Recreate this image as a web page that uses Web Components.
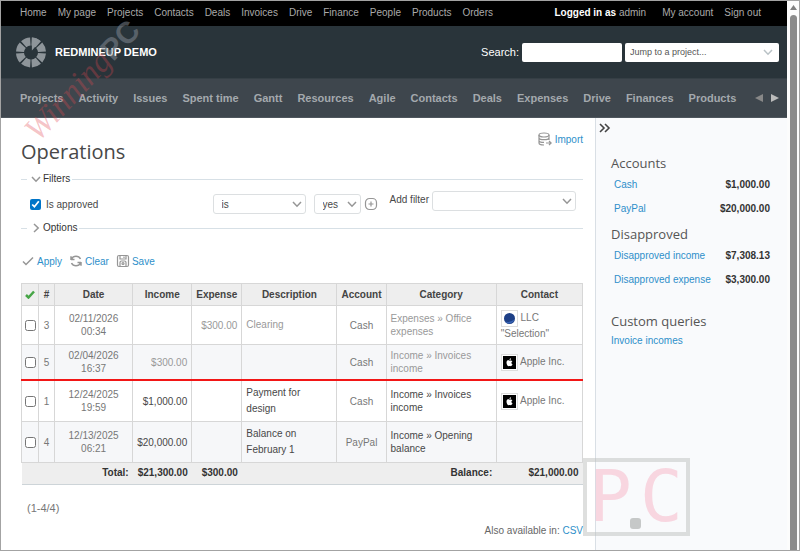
<!DOCTYPE html>
<html lang="en">
<head>
<meta charset="utf-8">
<title>Operations - RedmineUP Demo</title>
<style>
  :root {
    --link: #2e8fca;
    --text: #484848;
    --muted: #999;
    --line: #d7d7d7;
    --heading-font: "Open Sans", "Noto Sans", sans-serif;
  }

  body {
    margin: 0;
    font: 10px/13px "Liberation Sans", Arial, sans-serif;
    color: var(--text);
    background: #fff;
  }
</style>
</head>
<body>
<rm-window>
  <rm-top-menu></rm-top-menu>
  <rm-header>REDMINEUP DEMO</rm-header>
  <rm-main-menu></rm-main-menu>
  <rm-columns>
    <rm-content>
      <rm-title-bar>Operations</rm-title-bar>
      <rm-query-form></rm-query-form>
      <rm-operations></rm-operations>
      <rm-list-footer></rm-list-footer>
    </rm-content>
    <rm-sidebar slot="sidebar"></rm-sidebar>
  </rm-columns>
</rm-window>
<rm-watermark></rm-watermark>
<rm-stamp></rm-stamp>

<script>
class Component extends HTMLElement {
  constructor() {
    super()
    this.attachShadow({ mode: 'open' })
  }

  connectedCallback() {
    this.shadowRoot.innerHTML = this.render()
  }
}

const linkList = (items) => items.map((item) => `<a href="#">${item}</a>`).join('')

const icons = {
  check: '<path d="M2 7.5 5 10.500 12 3.500" stroke-width="1.5"/>',
  reload: '<path d="M2 6V2.2M2 5.5h3.5M2.5 5A5 5 0 0 1 11.5 5M12 8v3.8M12 8.5H8.5M11.5 9A5 5 0 0 1 2.5 9" stroke-width="1.5"/>',
  save: '<rect x="1.5" y="1.5" width="11" height="11" rx="1.5"/><path d="M4 1.5V5h6V1.5M8 2.5v1.5M4 12.5V8.5Q4 7 5.500 7h3Q10 7 10 8.500v4"/><circle cx="7" cy="9.500" r="1"/>',
  database: '<ellipse cx="6" cy="3" rx="5" ry="2"/><path d="M1 3v8c0 1.200 2 2 5 2M1 5.700c0 1.200 2 2 5 2s5-.8 5-2M1 8.400c0 1.200 2 2 5 2M11 3v5M8 11h5M11 9l2.200 2L11 13"/>',
  plus: '<rect x="1.500" y="1.500" width="11" height="11" rx="4"/><path d="M7 4.500v5M4.500 7h5"/>',
  down: '<path d="M3 5l4 4.200L11 5" stroke-width="1.500"/>',
  right: '<path d="M5 3l4.200 4L5 11" stroke-width="1.500"/>',
  double: '<path d="M2 3l4 4-4 4M7 3l4 4-4 4" stroke-width="1.600"/>'
}

class Icon extends Component {
  render() {
    return `
      <style>
        :host { display: inline-block; width: 14px; height: 14px; flex: none; color: #969696; }
        svg { display: block; width: 100%; height: 100%; }
      </style>
      <svg viewBox="0 0 14 14" fill="none" stroke="currentColor" stroke-width="1.2" aria-hidden="true">
        ${icons[this.getAttribute('name')]}
      </svg>
    `
  }
}

// Page frame with the vertical scrollbar at its right
class Window extends Component {
  render() {
    return `
      <style>
        :host { display: flex; box-sizing: border-box; min-height: 100vh; border: 1px solid #a3a3a3; }
        main { flex: 1; min-width: 0; display: flex; flex-direction: column; }
        .scroll { flex: 0 0 12px; display: flex; flex-direction: column; align-items: center; background: #fcfcfc; }
        svg { width: 7px; height: 5px; margin: 4px 0 5px; }
        .thumb { flex: 1; width: 7px; border-radius: 4px 4px 0 0; background: #8b8b8b; }
      </style>
      <main><slot></slot></main>
      <div class="scroll">
        <svg viewBox="0 0 7 5"><path d="M3.5 0 7 5H0z" fill="#808080"/></svg>
        <div class="thumb"></div>
      </div>
    `
  }
}

class TopMenu extends Component {
  render() {
    const items = ['Home', 'My page', 'Projects', 'Contacts', 'Deals', 'Invoices', 'Drive', 'Finance', 'People', 'Products', 'Orders']

    return `
      <style>
        :host { display: flex; justify-content: space-between; height: 25px; line-height: 23px; padding: 0 26px 0 19px; background: #000; color: #fff; }
        nav { display: flex; gap: 11px; white-space: nowrap; }
        a { color: #aaa; text-decoration: none; }
        .user { margin-right: 5px; }
      </style>
      <nav>${linkList(items)}</nav>
      <nav>
        <span class="user"><b>Logged in as</b> <a href="#">admin</a></span>
        ${linkList(['My account', 'Sign out'])}
      </nav>
    `
  }
}

class Header extends Component {
  render() {
    return `
      <style>
        :host { display: flex; align-items: center; height: 52px; padding: 0 8px 0 15px; background: #29343a; color: #fff; font-size: 11px; }
        .logo { width: 30px; height: 32px; margin-right: 9px; }
        h1 { flex: 1; margin: 0; font-size: 11px; }
        form { display: flex; align-items: center; }
        label { margin-right: 3px; }
        input { box-sizing: border-box; width: 100px; height: 19px; margin-right: 3px; padding: 0 4px; border: 0; border-radius: 2px; background: #fff; }
        .jump { display: grid; align-items: center; width: 154px; color: #555; }
        .jump > * { grid-area: 1 / 1; }
        select { appearance: none; width: 100%; height: 19px; padding: 0 5px; border: 0; border-radius: 2px; background: #fff; color: inherit; font: 9px "Liberation Sans", Arial, sans-serif; }
        rm-icon { justify-self: end; margin-right: 4px; color: #b9c2c6; pointer-events: none; }
      </style>
      <svg class="logo" viewBox="0 0 30 32" aria-hidden="true">
        <g fill="none" stroke="#8e959a" stroke-width="8">
          <circle cx="15" cy="16.500" r="11" pathLength="80" stroke-dasharray="8.400 1.600" stroke-dashoffset="-.8"/>
        </g>
        <path d="M15.900 1.500v13l8.500-9.500A15 15 0 0 0 15.900 1.500z" fill="#8e959a"/>
      </svg>
      <h1><slot></slot></h1>
      <form>
        <label for="q">Search:</label>
        <input id="q" type="text">
        <div class="jump">
          <select aria-label="Project"><option>Jump to a project...</option></select>
          <rm-icon name="down"></rm-icon>
        </div>
      </form>
    `
  }
}

class MainMenu extends Component {
  render() {
    const items = ['Projects', 'Activity', 'Issues', 'Spent time', 'Gantt', 'Resources', 'Agile', 'Contacts', 'Deals', 'Expenses', 'Drive', 'Finances', 'Products']

    return `
      <style>
        :host { display: flex; align-items: center; justify-content: space-between; box-sizing: border-box; height: 40px; padding: 0 8px 0 19px; background: #3e464d; border-top: 1px solid #353f45; border-bottom: 1px solid #4e565d; font-size: 11px; font-weight: bold; }
        nav { display: flex; gap: 15px; white-space: nowrap; }
        a { color: #a4a9ad; text-decoration: none; }
        .tabs { display: flex; gap: 8px; }
        button { padding: 0; border: 0; background: none; line-height: 0; }
      </style>
      <nav>${linkList(items)}</nav>
      <div class="tabs">
        <button type="button" aria-label="Previous"><svg width="8" height="8"><path d="M8 0v8L0 4z" fill="#888"/></svg></button>
        <button type="button" aria-label="Next"><svg width="8" height="8"><path d="M0 0v8l8-4z" fill="#bbb"/></svg></button>
      </div>
    `
  }
}

class Columns extends Component {
  render() {
    return `
      <style>
        :host { display: flex; flex: 1; }
        .content { flex: 1; min-width: 0; padding: 14px 12px 0 20px; }
        aside { flex: 0 0 191px; border-left: 1px solid #d9dfe5; background: #f9fafc; }
      </style>
      <div class="content"><slot></slot></div>
      <aside><slot name="sidebar"></slot></aside>
    `
  }
}

class Content extends Component {
  render() {
    return `
      <style>:host { display: block; }</style>
      <slot></slot>
    `
  }
}

class TitleBar extends Component {
  render() {
    return `
      <style>
        :host { display: flex; justify-content: space-between; align-items: flex-start; }
        h2 { margin: 6px 0 0; font: 20px/28px var(--heading-font); }
        a { display: flex; gap: 3px; color: var(--link); text-decoration: none; line-height: 15px; }
      </style>
      <h2><slot></slot></h2>
      <a href="#"><rm-icon name="database"></rm-icon>Import</a>
    `
  }
}

class QueryForm extends Component {
  render() {
    return `
      <style>
        :host { display: block; }
        fieldset { min-width: 0; margin: 0; padding: 0; border: 0; border-top: 1px solid #d7e0e6; }
        form { padding-top: 5px; }
        legend { display: flex; align-items: center; margin-left: 6px; padding: 0 2px; line-height: 16px; color: #333; }
        .filters { display: flex; align-items: flex-start; padding: 4px 7px 6px 9px; }
        .filter { flex: 1; display: flex; align-items: center; gap: 8px; padding-top: 3px; }
        .name { flex: 1; display: flex; align-items: center; gap: 5px; }
        .name input { width: 11px; height: 11px; margin: 0; accent-color: #0075c8; }
        .add { display: flex; gap: 3px; margin-left: 12px; }
        .add label { line-height: 18px; }
        .select { display: grid; align-items: center; }
        .select > * { grid-area: 1 / 1; }
        .select rm-icon { justify-self: end; margin-right: 2px; pointer-events: none; }
        select { appearance: none; width: 100%; height: 20px; padding: 0 8px; border: 1px solid #dcdfe1; border-radius: 3px; background: #fff; color: inherit; font: inherit; }
        .operator { width: 93px; }
        .value { width: 47px; }
        .available { width: 144px; }
        button { display: flex; align-items: center; padding: 0; border: 0; background: none; color: inherit; font: inherit; }
        .value + button { margin-left: -5px; }
        .buttons { display: flex; gap: 7px; margin: 18px 0 15px; }
        .buttons button { gap: 2px; color: var(--link); }
      </style>
      <form>
        <fieldset>
          <legend><rm-icon name="down"></rm-icon>Filters</legend>
          <div class="filters">
            <div class="filter">
              <div class="name">
                <input id="approved" type="checkbox" checked>
                <label for="approved">Is approved</label>
              </div>
              <div class="select operator">
                <select aria-label="Operator"><option>is</option></select>
                <rm-icon name="down"></rm-icon>
              </div>
              <div class="select value">
                <select aria-label="Value"><option>yes</option></select>
                <rm-icon name="down"></rm-icon>
              </div>
              <button type="button" aria-label="More values"><rm-icon name="plus"></rm-icon></button>
            </div>
            <div class="add">
              <label for="available">Add filter</label>
              <div class="select available">
                <select id="available"><option></option></select>
                <rm-icon name="down"></rm-icon>
              </div>
            </div>
          </div>
        </fieldset>
        <fieldset>
          <legend><rm-icon name="right"></rm-icon>Options</legend>
        </fieldset>
        <div class="buttons">
          <button type="submit"><rm-icon name="check"></rm-icon>Apply</button>
          <button type="reset"><rm-icon name="reload"></rm-icon>Clear</button>
          <button type="button"><rm-icon name="save"></rm-icon>Save</button>
        </div>
      </form>
    `
  }
}

class Avatar extends Component {
  render() {
    const pictures = {
      globe: '<circle cx="6.500" cy="6.500" r="5.500" fill="#1d3f86"/><path d="M2 9.500a5.500 5.500 0 0 0 9.500-2Q7 11 2 9.500z" fill="#3864b5"/>',
      apple: '<path d="M0 0h13v13H0z" fill="#000"/><path d="M6.500 4.700C5.500 4 3.500 4.200 3.500 6.500c0 2 1.300 3.800 2.200 3.800.4 0 .6-.2 1-.2s.6.2 1 .2c.8 0 1.500-1.100 1.800-2-1.500-.7-1.400-2.500-.1-3.100C8.700 4.200 7.300 4.300 6.500 4.700zM6.500 4c0-1 .7-1.700 1.500-1.800C8.100 3.200 7.400 4 6.500 4z" fill="#fff"/>'
    }

    return `
      <style>
        :host { display: inline-block; padding: 1px; border: 1px solid #ddd; background: #fff; vertical-align: middle; }
        svg { display: block; width: 13px; height: 13px; }
      </style>
      <svg viewBox="0 0 13 13" aria-hidden="true">${pictures[this.getAttribute('name')]}</svg>
    `
  }
}

const operations = [
  { id: 3, date: '02/11/2026 00:34', expense: '$300.00', description: 'Clearing', account: 'Cash', category: 'Expenses » Office expenses', contact: 'LLC "Selection"', avatar: 'globe' },
  { id: 5, date: '02/04/2026 16:37', income: '$300.00', account: 'Cash', category: 'Income » Invoices income', contact: 'Apple Inc.', avatar: 'apple' },
  { id: 1, approved: true, date: '12/24/2025 19:59', income: '$1,000.00', description: 'Payment for design', account: 'Cash', category: 'Income » Invoices income', contact: 'Apple Inc.', avatar: 'apple' },
  { id: 4, approved: true, date: '12/13/2025 06:21', income: '$20,000.00', description: 'Balance on February 1', account: 'PayPal', category: 'Income » Opening balance' }
]

class Operations extends Component {
  row(item) {
    const contact = item.contact ? `<rm-avatar name="${item.avatar}"></rm-avatar> ${item.contact}` : ''

    return `
      <tr class="${item.approved ? 'approved' : 'disapproved'}">
        <td class="box"><input type="checkbox" aria-label="Operation ${item.id}"></td>
        <td>${item.id}</td>
        <td class="date">${item.date}</td>
        <td class="money">${item.income || ''}</td>
        <td class="money">${item.expense || ''}</td>
        <td class="description">${item.description || ''}</td>
        <td>${item.account}</td>
        <td class="category">${item.category}</td>
        <td class="contact">${contact}</td>
      </tr>
    `
  }

  render() {
    const widths = [17, 16, 78, 59, 50, 95, 49, 110, 86]
    const heads = ['Date', 'Income', 'Expense', 'Description', 'Account', 'Category', 'Contact']

    return `
      <style>
        :host { display: block; }
        table { width: 100%; table-layout: fixed; border-collapse: collapse; }
        th, td { padding: 4px; border: 1px solid var(--line); text-align: center; color: #777; }
        th { padding: 4px 0; background: #eee; color: #444; }
        th svg { display: block; margin: 0 auto; }
        th:nth-child(-n+2), td:nth-child(-n+2) { padding-left: 0; padding-right: 0; }
        tbody tr:nth-child(even) { background: #f6f7f9; }
        input { display: block; width: 11px; height: 11px; margin: 0 auto; }
        .date { padding-left: 12px; padding-right: 12px; }
        .money { text-align: right; }
        .description { padding-right: 16px; text-align: left; line-height: 16px; }
        .category, .contact { text-align: left; }
        .approved .money, .approved .description, .approved .category { color: var(--text); }
        .disapproved .money, .disapproved .description, .disapproved .category { color: var(--muted); }
        .approved:nth-child(3) td { border-top: 2px solid #f21616; }
        tfoot td:nth-child(n) { padding: 3px 4px 5px; border: 0; border-bottom: 1px solid #cdd4d8; background: #eee; color: #333; font-weight: bold; text-align: right; }
      </style>
      <table>
        <colgroup>${widths.map((width) => `<col style="width: ${width}px">`).join('')}</colgroup>
        <thead>
          <tr>
            <th><svg width="10" height="9" aria-label="Select all"><path d="M1 5 3.500 7.500 9 1.500" fill="none" stroke="#46a546" stroke-width="2.500"/></svg></th>
            <th>#</th>
            ${heads.map((head) => `<th>${head}</th>`).join('')}
          </tr>
        </thead>
        <tbody>${operations.map((item) => this.row(item)).join('')}</tbody>
        <tfoot>
          <tr>
            <td colspan="3">Total:</td>
            <td>$21,300.00</td>
            <td>$300.00</td>
            <td colspan="3">Balance:</td>
            <td>$21,000.00</td>
          </tr>
        </tfoot>
      </table>
    `
  }
}

class ListFooter extends Component {
  render() {
    return `
      <style>
        :host { display: block; color: #666; }
        p { margin: 0; }
        .pages { padding: 17px 6px 9px; font-size: 11px; color: #777; }
        .formats { text-align: right; }
        a { color: var(--link); text-decoration: none; }
      </style>
      <p class="pages">(1-4/4)</p>
      <p class="formats">Also available in: <a href="#">CSV</a></p>
    `
  }
}

class Sidebar extends Component {
  row([name, amount]) {
    return `<tr><td><a href="#">${name}</a></td><td class="amount">${amount}</td></tr>`
  }

  render() {
    return `
      <style>
        :host { display: block; padding: 3px 17px 0 15px; }
        button { display: block; margin-left: -13px; padding: 0; border: 0; background: none; line-height: 0; }
        button rm-icon { color: #444; }
        h3 { margin: 5px 0 0; font: 13px/18px var(--heading-font); color: #555; }
        .first { margin-top: 19px; }
        .queries { margin-top: 21px; }
        table { width: 100%; border-collapse: collapse; }
        td { height: 24px; padding: 0 0 0 3px; }
        .amount { padding: 0; text-align: right; font-weight: bold; color: #333; }
        a { color: var(--link); text-decoration: none; }
        p { margin: 4px 0 0; }
      </style>
      <button type="button" aria-label="Hide sidebar"><rm-icon name="double"></rm-icon></button>
      <h3 class="first">Accounts</h3>
      <table>${[['Cash', '$1,000.00'], ['PayPal', '$20,000.00']].map(this.row).join('')}</table>
      <h3>Disapproved</h3>
      <table>${[['Disapproved income', '$7,308.13'], ['Disapproved expense', '$3,300.00']].map(this.row).join('')}</table>
      <h3 class="queries">Custom queries</h3>
      <p><a href="#">Invoice incomes</a></p>
    `
  }
}

// Diagonal mark that lies over the header
class Watermark extends Component {
  render() {
    return `
      <style>
        :host { position: absolute; left: 47px; top: 113px; transform: rotate(-47deg); transform-origin: 0 100%; pointer-events: none; white-space: nowrap; line-height: 30px; }
        i { font: italic 33px/30px "Liberation Serif", serif; color: rgba(226, 70, 80, .32); }
        b { font: bold 30px/30px "Liberation Sans", sans-serif; color: rgba(135, 143, 152, .5); }
      </style>
      <i>Winning</i><b>PC</b>
    `
  }
}

class Stamp extends Component {
  render() {
    return `
      <style>
        :host { position: absolute; left: 583px; top: 458px; pointer-events: none; }
        svg { display: block; overflow: visible; }
        text { font: 71px "DejaVu Sans Mono", monospace; fill: rgba(246, 190, 205, .6); }
      </style>
      <svg width="107" height="78">
        <rect x="2" y="2" width="103" height="74" fill="none" stroke="rgba(190, 192, 190, .5)" stroke-width="4"/>
        <text x="6" y="63">P</text>
        <text x="57" y="63">C</text>
        <rect x="47" y="60" width="11" height="11" rx="3" fill="#c6c8c8"/>
      </svg>
    `
  }
}

customElements.define('rm-icon', Icon)
customElements.define('rm-avatar', Avatar)
customElements.define('rm-window', Window)
customElements.define('rm-top-menu', TopMenu)
customElements.define('rm-header', Header)
customElements.define('rm-main-menu', MainMenu)
customElements.define('rm-columns', Columns)
customElements.define('rm-content', Content)
customElements.define('rm-title-bar', TitleBar)
customElements.define('rm-query-form', QueryForm)
customElements.define('rm-operations', Operations)
customElements.define('rm-list-footer', ListFooter)
customElements.define('rm-sidebar', Sidebar)
customElements.define('rm-watermark', Watermark)
customElements.define('rm-stamp', Stamp)
</script>
</body>
</html>
